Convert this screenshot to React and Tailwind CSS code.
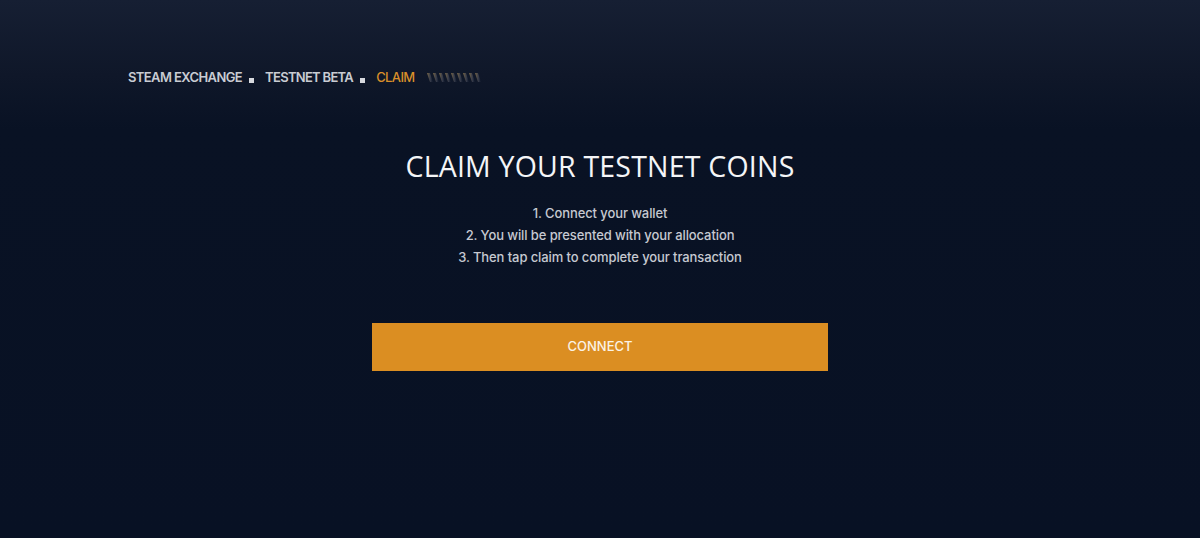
import React from "react";

function Hatch() {
  const bars = Array.from({ length: 9 });
  return (
    <svg width="58" height="9" viewBox="0 0 58 9" className="ml-[12px]">
      <defs>
        <linearGradient id="fade" x1="0" x2="1" y1="0" y2="0">
          <stop offset="0" stopColor="#8a7348" stopOpacity="0.9" />
          <stop offset="0.6" stopColor="#4b4f5e" stopOpacity="0.6" />
          <stop offset="1" stopColor="#2a3145" stopOpacity="0.1" />
        </linearGradient>
      </defs>
      <g fill="url(#fade)">
        {bars.map((_, i) => (
          <polygon
            key={i}
            points={`${i * 6},0 ${i * 6 + 3},0 ${i * 6 + 6},9 ${i * 6 + 3},9`}
          />
        ))}
      </g>
    </svg>
  );
}

function Dot() {
  return <span className="ml-[7px] mr-[11px] mt-[6px] inline-block h-[5px] w-[5px] bg-[#d7d9de]" />;
}

export default function App() {
  return (
    <div
      className="min-h-[538px] w-full bg-[linear-gradient(180deg,#161f33_0%,#0f1729_14%,#091224_24%,#081124_100%)]"
      style={{ fontFamily: "Inter, 'Noto Sans', sans-serif" }}
    >
      <nav className="flex items-center pl-[128px] pt-[69px] text-[13px] font-semibold uppercase tracking-[-0.6px] leading-[16px]">
        <span className="text-[#c9ccd3]">Steam Exchange</span>
        <Dot />
        <span className="tracking-[-0.7px] text-[#c9ccd3]">Testnet Beta</span>
        <Dot />
        <span className="font-medium text-[#d98f2a]">Claim</span>
        <Hatch />
      </nav>

      <main className="flex flex-col items-center">
        <h1
          className="mt-[64px] text-[28.5px] font-normal leading-[34px] tracking-[0.2px] text-[#f4f5f7]"
          style={{ fontFamily: "'Open Sans', sans-serif" }}
        >
          CLAIM YOUR TESTNET COINS
        </h1>
        <ol className="mt-[19px] flex flex-col items-center text-[13px] font-medium leading-[22px] tracking-[-0.1px] text-[#c6c9d1]">
          <li>1. Connect your wallet</li>
          <li>2. You will be presented with your allocation</li>
          <li>3. Then tap claim to complete your transaction</li>
        </ol>
        <button className="mt-[55px] h-[48px] w-[456px] bg-[#db8e22] text-[13px] font-medium text-[#fbf3e6]">
          CONNECT
        </button>
      </main>
    </div>
  );
}
